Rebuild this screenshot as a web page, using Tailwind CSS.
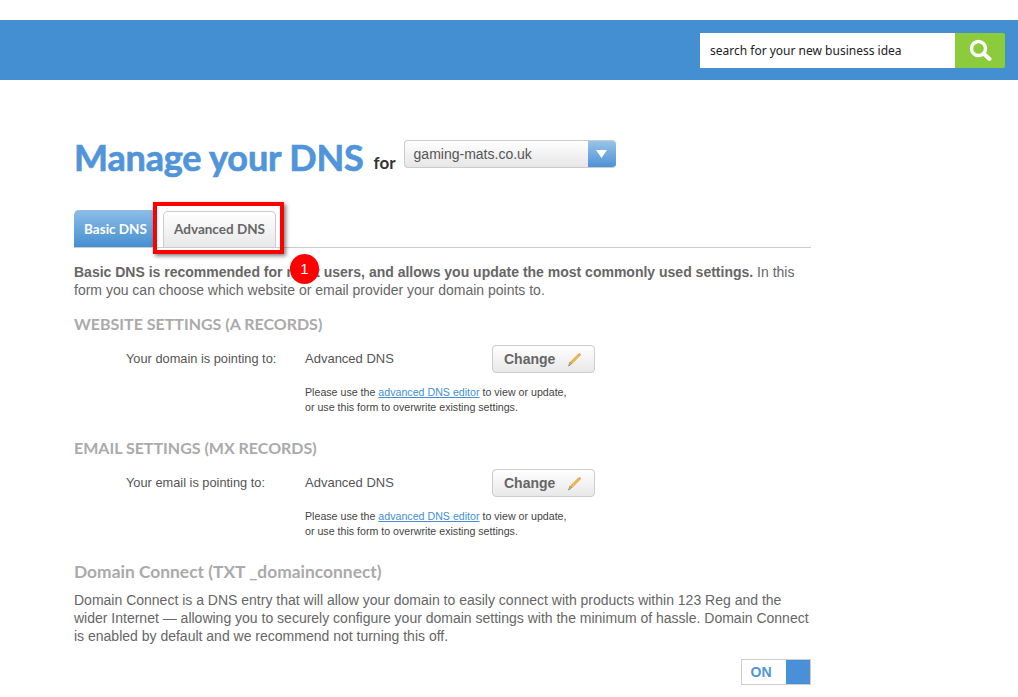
<!DOCTYPE html>
<html><head><meta charset="utf-8"><script src="https://cdn.jsdelivr.net/npm/@tailwindcss/browser@4"></script></head>
<body class="bg-white overflow-hidden h-[697px] relative font-['Liberation_Sans',sans-serif] text-[14px] text-[#666]">
<header class="mt-5 h-[60px] bg-[#448fd2] flex items-center justify-end pr-[13px]">
  <div class="flex h-[35px]">
    <div class="w-[255px] bg-white pl-[10px] pt-[2px] flex items-center font-['Noto_Sans',sans-serif] text-[12px] text-[#222]">search for your new business idea</div>
    <div class="w-[50px] bg-[#8ccb3c] rounded-r-[2px] flex items-center justify-center">
      <svg width="24" height="24" viewBox="0 0 24 24" fill="none" stroke="#fff"><circle cx="10.5" cy="10.5" r="7" stroke-width="3.4"/><path d="M15.5 15.5L21.5 21" stroke-width="3.8" stroke-linecap="round"/></svg>
    </div>
  </div>
</header>
<main class="w-[737px] ml-[74px]">
  <div class="flex items-start mt-[60px] h-[40px]">
    <h1 class="font-['Lato',sans-serif] font-bold text-[36px] leading-[34px] text-[#5095da] tracking-[-0.15px] [-webkit-text-stroke:0.7px_#5095da]">Manage your DNS</h1>
    <span class="font-['Lato',sans-serif] font-bold text-[17px] leading-[20px] mt-[13px] ml-[10px] text-[#333]">for</span>
    <div class="ml-[8px] w-[212px] h-[28px] flex rounded-[4px] border border-[#ccc] border-r-0 bg-gradient-to-b from-white to-[#e6e6e6] overflow-hidden">
      <span class="flex-1 pl-[9px] leading-[26px] text-[14px] text-[#555]">gaming-mats.co.uk</span>
      <span class="w-[28px] -my-px bg-gradient-to-b from-[#9cc5e8] to-[#4a90d4] flex items-center justify-center"><svg width="11" height="8" viewBox="0 0 11 8"><path d="M0 0H11L5.5 8Z" fill="#fff"/></svg></span>
    </div>
  </div>
  <div class="mt-[31px] h-[37px] flex items-end gap-[6px] border-b border-[#ccc]">
    <div class="w-[83px] h-[37px] pt-[1px] rounded-t-[5px] bg-gradient-to-b from-[#8dbde6] to-[#448fd2] text-white font-['Lato',sans-serif] font-bold text-[13.5px] flex items-center justify-center">Basic DNS</div>
    <div class="w-[113px] h-[36px] pb-[1px] rounded-t-[5px] border border-b-0 border-[#ccc] bg-gradient-to-b from-white to-[#e8e8e8] text-[#666] font-['Lato',sans-serif] font-bold text-[13.5px] flex items-center justify-center">Advanced DNS</div>
  </div>
  <p class="mt-[15px] leading-[18px]"><b>Basic DNS is recommended for most users, and allows you update the most commonly used settings.</b> In this form you can choose which website or email provider your domain points to.</p>

  <h2 class="mt-[15px] font-['Lato',sans-serif] font-bold text-[16px] leading-[20px] text-[#aaa]">WEBSITE SETTINGS (A RECORDS)</h2>
  <section class="flex mt-[11px]">
    <div class="w-[231px] pl-[52px] leading-[27px] text-[12.8px] text-[#555]">Your domain is pointing to:</div>
    <div>
      <div class="flex h-[28px] items-center">
        <span class="w-[187px] pb-[1px] text-[13px] text-[#555]">Advanced DNS</span>
        <button class="w-[103px] h-[28px] rounded-[4px] border border-[#ccc] bg-gradient-to-b from-white to-[#e8e8e8] flex items-center pl-[11px] font-bold text-[14px] text-[#666]">Change
          <svg class="ml-[11px]" width="16" height="17" viewBox="0 0 16 17" fill="none"><path d="M4 11.5L12.5 3L14 4.5L5.5 13Z" fill="#f4b94e" stroke="#e39a2c" stroke-width=".8"/><path d="M12.5 3L13.5 2L15 3.5L14 4.5Z" fill="#e88a70"/><path d="M4 11.5L2.5 15L5.5 13Z" fill="#f5e2bb" stroke="#6a5a40" stroke-width=".6"/></svg>
        </button>
      </div>
      <p class="mt-[12px] text-[10.65px] leading-[15px] text-[#444]">Please use the <a class="text-[#448fd2] underline">advanced DNS editor</a> to view or update,<br>or use this form to overwrite existing settings.</p>
    </div>
  </section>

  <h2 class="mt-[23px] font-['Lato',sans-serif] font-bold text-[16px] leading-[20px] text-[#aaa]">EMAIL SETTINGS (MX RECORDS)</h2>
  <section class="flex mt-[11px]">
    <div class="w-[231px] pl-[52px] leading-[27px] text-[12.8px] text-[#555]">Your email is pointing to:</div>
    <div>
      <div class="flex h-[28px] items-center">
        <span class="w-[187px] text-[13px] text-[#555]">Advanced DNS</span>
        <button class="w-[103px] h-[28px] rounded-[4px] border border-[#ccc] bg-gradient-to-b from-white to-[#e8e8e8] flex items-center pl-[11px] font-bold text-[14px] text-[#666]">Change
          <svg class="ml-[11px]" width="16" height="17" viewBox="0 0 16 17" fill="none"><path d="M4 11.5L12.5 3L14 4.5L5.5 13Z" fill="#f4b94e" stroke="#e39a2c" stroke-width=".8"/><path d="M12.5 3L13.5 2L15 3.5L14 4.5Z" fill="#e88a70"/><path d="M4 11.5L2.5 15L5.5 13Z" fill="#f5e2bb" stroke="#6a5a40" stroke-width=".6"/></svg>
        </button>
      </div>
      <p class="mt-[12px] text-[10.65px] leading-[15px] text-[#444]">Please use the <a class="text-[#448fd2] underline">advanced DNS editor</a> to view or update,<br>or use this form to overwrite existing settings.</p>
    </div>
  </section>

  <h2 class="mt-[23px] font-['Lato',sans-serif] font-bold text-[17.4px] leading-[20px] text-[#aaa]">Domain Connect (TXT _domainconnect)</h2>
  <p class="mt-[9px] leading-[18px]">Domain Connect is a DNS entry that will allow your domain to easily connect with products within 123 Reg and the wider Internet — allowing you to securely configure your domain settings with the minimum of hassle. Domain Connect is enabled by default and we recommend not turning this off.</p>
  <div class="mt-[14px] flex justify-end">
    <div class="w-[70px] h-[26px] border border-[#ccc] flex">
      <span class="flex-1 pr-[6px] text-center font-bold text-[14px] leading-[24px] text-[#5095da]">ON</span>
      <span class="w-[24px] bg-[#4a90d9]"></span>
    </div>
  </div>
</main>
<div class="absolute left-[153px] top-[202px] w-[131px] h-[52px] border-4 border-[#f00] shadow-[2px_2px_4px_rgba(0,0,0,0.5)]"></div>
<div class="absolute left-[290px] top-[254px] w-[29px] h-[30px] rounded-full bg-[#f00] text-white text-[15px] flex items-center justify-center">1</div>
</body></html>
